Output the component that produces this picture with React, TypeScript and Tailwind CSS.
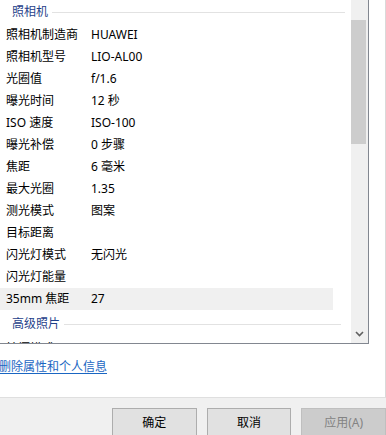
import React from 'react';

const cameraRows = [
  ['照相机制造商', 'HUAWEI'],
  ['照相机型号', 'LIO-AL00'],
  ['光圈值', 'f/1.6'],
  ['曝光时间', '12 秒'],
  ['ISO 速度', 'ISO-100'],
  ['曝光补偿', '0 步骤'],
  ['焦距', '6 毫米'],
  ['最大光圈', '1.35'],
  ['测光模式', '图案'],
  ['目标距离', ''],
  ['闪光灯模式', '无闪光'],
  ['闪光灯能量', ''],
  ['35mm 焦距', '27'],
];

const SectionHeader = ({ title, className }: { title: string; className: string }) => (
  <div className={`flex items-center pl-[12px] ${className}`}>
    <span className="text-[#1f3f8a]">{title}</span>
    <div className="ml-[4px] h-px flex-1 bg-[#e2e2e2]" />
  </div>
);

const App = () => {
  return (
    <div
      className="relative h-[435px] w-[386px] overflow-hidden bg-white text-[12px] text-black"
      style={{ fontFamily: '"Noto Sans", "Noto Sans CJK SC", sans-serif' }}
    >
      {/* Property panel */}
      <div className="flex h-[397px] flex-col border-r border-[#d9d9d9]">
        <div className="flex h-[344px] w-[369px] border-b border-r border-[#828790]">
          <div className="flex-1 overflow-hidden">
            <SectionHeader title="照相机" className="mr-[6px] h-[24px]" />
            {cameraRows.map(([label, value], index) => (
              <div
                key={index}
                className={`mr-[18px] flex h-[22px] items-center ${index === cameraRows.length - 1 ? 'bg-[#f0f0f0]' : ''}`}
              >
                <span className="w-[91px] pl-[6px]">{label}</span>
                <span>{value}</span>
              </div>
            ))}
            <SectionHeader title="高级照片" className="mr-[10px] h-[28px]" />
            <div className="mr-[18px] flex h-[22px] items-center">
              <span className="w-[91px] pl-[6px]">拍摄模式</span>
            </div>
          </div>

          {/* Scrollbar */}
          <div className="flex w-[17px] flex-col bg-[#f0f0f0]">
            <div className="h-[20px]" />
            <div className="h-[124px] w-[15px] bg-[#cdcdcd]" />
            <div className="flex-1" />
            <div className="flex h-[17px] items-center justify-center pb-[2px]">
              <svg width="9" height="6" viewBox="0 0 9 6">
                <path d="M1 1 L4.5 4.5 L8 1" fill="none" stroke="#606060" strokeWidth="1.6" />
              </svg>
            </div>
          </div>
        </div>

        <div className="pt-[14px]">
          <a className="-ml-px cursor-pointer text-[#1a66c2] underline underline-offset-2">
            删除属性和个人信息
          </a>
        </div>
      </div>

      {/* Button bar */}
      <div className="h-[38px] border-t border-[#dfdfdf] bg-[#f0f0f0] pt-[10px]">
        <div className="flex gap-[10px] pl-[112px]">
          <button className="h-[30px] w-[85px] border border-[#adadad] bg-[#e1e1e1]">确定</button>
          <button className="h-[30px] w-[85px] border border-[#adadad] bg-[#e1e1e1]">取消</button>
          <button className="h-[30px] w-[85px] border border-[#bfbfbf] bg-[#cccccc] text-[#838383]">
            应用(A)
          </button>
        </div>
      </div>
    </div>
  );
};

export default App;
